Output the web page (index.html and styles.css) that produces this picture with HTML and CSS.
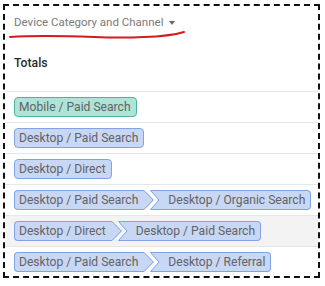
FILE: index.html
```html
<!DOCTYPE html>
<html>
<head>
<meta charset="utf-8">
<link rel="stylesheet" href="styles.css">
</head>
<body>
<div class="frame">
  <div class="header">
    <span class="title">Device Category and Channel</span><span class="caret"></span>
    <svg class="scribble" width="200" height="16" viewBox="0 0 200 16"><path d="M6 10 C 30 8.5, 60 9, 90 10 C 110 10.8, 120 11, 140 10 C 158 9.5, 170 8, 180 5" fill="none" stroke="#d31a1f" stroke-width="2" stroke-linecap="round"/></svg>
  </div>
  <div class="totals">Totals</div>
  <div class="row"><span class="chip teal">Mobile / Paid Search</span></div>
  <div class="row"><span class="chip">Desktop / Paid Search</span></div>
  <div class="row"><span class="chip">Desktop / Direct</span></div>
  <div class="row">
    <span class="crumb"><span class="cbody first">Desktop / Paid Search</span><svg class="tip" width="10" height="20" viewBox="0 0 10 20"><polygon points="0,0 10,10 0,20" fill="#c8d7f4"/><polyline points="0,0.5 9.3,10 0,19.5" fill="none" stroke="#7ea3e6" stroke-width="1" stroke-linejoin="round"/></svg></span>
    <span class="crumb next"><svg class="notch" width="10" height="20" viewBox="0 0 10 20"><polygon points="0,0 10,0 10,20 0,20 9,10" fill="#c8d7f4"/><polyline points="10,0.5 0.5,0.5 9,10 0.5,19.5 10,19.5" fill="none" stroke="#7ea3e6" stroke-width="1" stroke-linejoin="round"/></svg><span class="cbody last">Desktop / Organic Search</span></span>
  </div>
  <div class="row hover">
    <span class="crumb"><span class="cbody first">Desktop / Direct</span><svg class="tip" width="10" height="20" viewBox="0 0 10 20"><polygon points="0,0 10,10 0,20" fill="#c8d7f4"/><polyline points="0,0.5 9.3,10 0,19.5" fill="none" stroke="#7ea3e6" stroke-width="1" stroke-linejoin="round"/></svg></span>
    <span class="crumb next"><svg class="notch" width="10" height="20" viewBox="0 0 10 20"><polygon points="0,0 10,0 10,20 0,20 9,10" fill="#c8d7f4"/><polyline points="10,0.5 0.5,0.5 9,10 0.5,19.5 10,19.5" fill="none" stroke="#7ea3e6" stroke-width="1" stroke-linejoin="round"/></svg><span class="cbody last">Desktop / Paid Search</span></span>
  </div>
  <div class="row">
    <span class="crumb"><span class="cbody first">Desktop / Paid Search</span><svg class="tip" width="10" height="20" viewBox="0 0 10 20"><polygon points="0,0 10,10 0,20" fill="#c8d7f4"/><polyline points="0,0.5 9.3,10 0,19.5" fill="none" stroke="#7ea3e6" stroke-width="1" stroke-linejoin="round"/></svg></span>
    <span class="crumb next"><svg class="notch" width="10" height="20" viewBox="0 0 10 20"><polygon points="0,0 10,0 10,20 0,20 9,10" fill="#c8d7f4"/><polyline points="10,0.5 0.5,0.5 9,10 0.5,19.5 10,19.5" fill="none" stroke="#7ea3e6" stroke-width="1" stroke-linejoin="round"/></svg><span class="cbody last">Desktop / Referral</span></span>
  </div>
</div>
</body>
</html>
```

FILE: styles.css
```css
* { box-sizing: border-box; }
html, body { margin: 0; padding: 0; background: #fff; }
body { font-family: Roboto, "Noto Sans", sans-serif; }

.frame {
  position: relative;
  margin: 4px 0 0 3px;
  width: 317px;
  height: 274px;
  border: 2px dashed #111;
  overflow: hidden;
}

.header {
  position: relative;
  padding: 8px 0 0 9px;
  height: 49px;
  display: flex;
  align-items: flex-start;
}
.title {
  font-size: 11.5px;
  line-height: 16px;
  color: #7a7a7a;
}
.caret {
  margin: 7px 0 0 6px;
  width: 0;
  height: 0;
  border-left: 3.5px solid transparent;
  border-right: 3.5px solid transparent;
  border-top: 4px solid #6a6a6a;
}
.scribble {
  position: absolute;
  left: -1px;
  top: 21px;
}

.totals {
  padding-left: 9px;
  font-size: 12.2px;
  line-height: 17px;
  font-weight: 500;
  color: #2a2a2a;
  height: 36px;
}

.row {
  height: 31px;
  border-top: 1px solid #e6e6e6;
  padding-left: 9px;
  display: flex;
  align-items: center;
}
.row.hover { background: #f3f3f3; }

.chip, .cbody {
  display: inline-flex;
  align-items: center;
  height: 20px;
  font-size: 12.1px;
  color: #636363;
  background: #c8d7f4;
  border: 1px solid #7ea3e6;
  white-space: nowrap;
}
.chip {
  border-radius: 4px;
  padding: 0 5px 0 4px;
}
.chip.teal {
  background: #ace5d7;
  border-color: #4fb39c;
}

.crumb { display: inline-flex; align-items: center; height: 20px; }
.crumb svg { display: block; }
.crumb.next { margin-left: -4px; }
.cbody.first {
  border-right: none;
  border-radius: 4px 0 0 4px;
  padding: 0 6px 0 4px;
}
.cbody.last {
  border-left: none;
  border-radius: 0 4px 4px 0;
  padding: 0 5px 0 8px;
}
```
